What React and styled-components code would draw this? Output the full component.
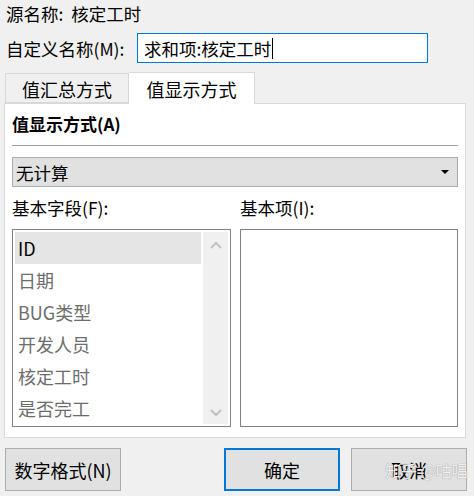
import React from 'react';
import styled, { createGlobalStyle } from 'styled-components';

const Global = createGlobalStyle`
  body {
    margin: 0;
    background: #f0f0f0;
    font-family: "Noto Sans CJK SC", "Noto Sans", sans-serif;
    color: #000;
  }
`;

const Dialog = styled.div`
  position: relative;
  width: 474px;
  height: 496px;
  overflow: hidden;
  font-size: 17.5px;
`;

const SourceRow = styled.div`
  height: 28px;
  line-height: 28px;
  padding-left: 6px;
  white-space: nowrap;
`;

const NameRow = styled.div`
  display: flex;
  align-items: center;
  margin-top: 5px;
  padding-left: 6px;
  height: 30px;
`;

const Label = styled.span`
  width: 131px;
  white-space: nowrap;
`;

const NameInput = styled.div`
  box-sizing: border-box;
  width: 291px;
  height: 30px;
  border: 1px solid #0078d7;
  background: #fff;
  padding-left: 6px;
  display: flex;
  align-items: center;
  white-space: nowrap;
`;

const Caret = styled.span`
  display: inline-block;
  width: 1px;
  height: 21px;
  background: #000;
  margin-left: 1px;
`;

const TabStrip = styled.div`
  display: flex;
  align-items: flex-end;
  margin-top: 9px;
  padding-left: 5px;
  height: 31px;
  position: relative;
  z-index: 1;
`;

const Tab = styled.div`
  box-sizing: border-box;
  width: ${p => (p.$active ? 126 : 124)}px;
  height: ${p => (p.$active ? 32 : 30)}px;
  margin-bottom: ${p => (p.$active ? -1 : 0)}px;
  border: 1px solid #d9d9d9;
  border-bottom: ${p => (p.$active ? 'none' : '1px solid #d9d9d9')};
  border-left: ${p => (p.$active ? 'none' : '1px solid #d9d9d9')};
  background: ${p => (p.$active ? '#fff' : '#f0f0f0')};
  display: flex;
  align-items: center;
  justify-content: center;
  font-size: 18px;
  padding-top: ${p => (p.$active ? 0 : 2)}px;
`;

const Panel = styled.div`
  box-sizing: border-box;
  margin-left: 4px;
  width: 462px;
  height: 335px;
  border: 1px solid #d9d9d9;
  background: #fff;
  padding: 8px 7px 10px 7px;
  display: flex;
  flex-direction: column;
`;

const Heading = styled.div`
  height: 24px;
  line-height: 24px;
  font-weight: bold;
  font-size: 17px;
`;

const Rule = styled.div`
  margin-top: 9px;
  height: 1px;
  background: #a0a0a0;
`;

const Select = styled.div`
  box-sizing: border-box;
  margin-top: 11px;
  height: 30px;
  background: #e1e1e1;
  border: 1px solid #adadad;
  display: flex;
  align-items: center;
  justify-content: space-between;
  padding: 0 8px 0 3px;
`;

const Arrow = styled.span`
  width: 0;
  height: 0;
  border-left: 4px solid transparent;
  border-right: 4px solid transparent;
  border-top: 4px solid #000;
`;

const Columns = styled.div`
  display: grid;
  grid-template-columns: 219px 218px;
  column-gap: 9px;
  margin-top: ${p => p.$top}px;
`;

const FieldLabel = styled.div`
  height: 22px;
  line-height: 22px;
`;

const ListBox = styled.div`
  box-sizing: border-box;
  height: 198px;
  border: 1px solid #828282;
  background: #fff;
  padding: 2px;
  display: flex;
  gap: 2px;
`;

const Items = styled.div`
  flex: 1;
  display: flex;
  flex-direction: column;
`;

const Item = styled.div`
  height: 32px;
  line-height: 32px;
  padding-left: 3px;
  font-size: 18px;
  color: ${p => (p.$selected ? '#000' : '#6d6d6d')};
  background: ${p => (p.$selected ? '#e5e5e5' : 'transparent')};
  white-space: nowrap;
`;

const ScrollBar = styled.div`
  width: 25px;
  background: #f0f0f0;
  display: flex;
  flex-direction: column;
  justify-content: space-between;
  align-items: center;
  padding: 9px 0 7px;
`;

const Buttons = styled.div`
  display: flex;
  align-items: center;
  margin-top: 10px;
  padding: 0 7px 0 5px;
`;

const Group = styled.div`
  display: flex;
  gap: 11px;
  margin-left: auto;
`;

const Button = styled.div`
  box-sizing: border-box;
  width: 116px;
  height: 43px;
  background: #e1e1e1;
  border: ${p => (p.$primary ? '2px solid #0078d7' : '1px solid #adadad')};
  display: flex;
  align-items: center;
  justify-content: center;
  font-size: 18px;
`;

const Watermark = styled.div`
  position: absolute;
  left: 385px;
  top: 458px;
  font-size: 16px;
  color: rgba(255, 255, 255, 0.9);
  text-shadow: 0 0 1px rgba(90, 90, 90, 0.8);
  white-space: nowrap;
  pointer-events: none;
`;

const Chevron = ({ up }) => (
  <svg width="12" height="8" viewBox="0 0 12 8">
    <path
      d={up ? 'M1 7 L6 2 L11 7' : 'M1 1 L6 6 L11 1'}
      fill="none"
      stroke="#c2c2c2"
      strokeWidth="2"
    />
  </svg>
);

const fields = ['ID', '日期', 'BUG类型', '开发人员', '核定工时', '是否完工'];

export default function App() {
  return (
    <Dialog>
      <Global />
      <SourceRow>源名称:&nbsp; 核定工时</SourceRow>
      <NameRow>
        <Label>自定义名称(M):</Label>
        <NameInput>
          求和项:核定工时<Caret />
        </NameInput>
      </NameRow>
      <TabStrip>
        <Tab>值汇总方式</Tab>
        <Tab $active>值显示方式</Tab>
      </TabStrip>
      <Panel>
        <Heading>值显示方式(A)</Heading>
        <Rule />
        <Select>
          <span>无计算</span>
          <Arrow />
        </Select>
        <Columns $top={10}>
          <FieldLabel>基本字段(F):</FieldLabel>
          <FieldLabel>基本项(I):</FieldLabel>
        </Columns>
        <Columns $top={10}>
          <ListBox>
            <Items>
              {fields.map((f, i) => (
                <Item key={f} $selected={i === 0}>{f}</Item>
              ))}
            </Items>
            <ScrollBar>
              <Chevron up />
              <Chevron />
            </ScrollBar>
          </ListBox>
          <ListBox />
        </Columns>
      </Panel>
      <Buttons>
        <Button>数字格式(N)</Button>
        <Group>
          <Button $primary>确定</Button>
          <Button>取消</Button>
        </Group>
      </Buttons>
      <Watermark>知乎 @咕唱</Watermark>
    </Dialog>
  );
}
